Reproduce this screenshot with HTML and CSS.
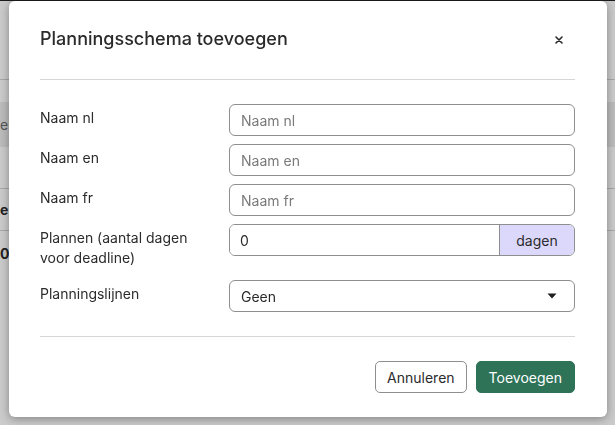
FILE: index.html
```html
<!DOCTYPE html>
<html lang="nl">
<head>
    <meta charset="UTF-8">
    <meta name="viewport" content="width=device-width, initial-scale=1.0">
    <title>Planningsschema toevoegen</title>
    <link rel="stylesheet" href="styles.css">
</head>
<body>
    <!-- Page behind the dialog -->
    <div class="page">
        <div class="topbar"></div>
        <div class="table">
            <div class="row row-head"></div>
            <div class="row row-gap"></div>
            <div class="row row-band"><span class="cell">er</span></div>
            <div class="row row-plain"></div>
            <div class="row row-plain"><span class="cell bold">e</span></div>
            <div class="row row-last"><span class="cell bold">0</span></div>
        </div>
    </div>

    <!-- Dialog -->
    <div class="backdrop">
        <div class="modal">
            <div class="modal-header">
                <h2>Planningsschema toevoegen</h2>
                <button class="close" aria-label="Sluiten">
                    <svg width="8" height="8" viewBox="0 0 8 8">
                        <path d="M1 1L7 7M7 1L1 7" stroke="#2a2a2a" stroke-width="1.6" stroke-linecap="round"/>
                    </svg>
                </button>
            </div>
            <div class="divider"></div>

            <form class="modal-body">
                <div class="form-row">
                    <label for="nameNl">Naam nl</label>
                    <input type="text" id="nameNl" placeholder="Naam nl">
                </div>
                <div class="form-row">
                    <label for="nameEn">Naam en</label>
                    <input type="text" id="nameEn" placeholder="Naam en">
                </div>
                <div class="form-row">
                    <label for="nameFr">Naam fr</label>
                    <input type="text" id="nameFr" placeholder="Naam fr">
                </div>
                <div class="form-row">
                    <label for="days">Plannen (aantal dagen voor deadline)</label>
                    <div class="input-group">
                        <input type="text" id="days" value="0">
                        <span class="addon">dagen</span>
                    </div>
                </div>
                <div class="form-row">
                    <label for="lines">Planningslijnen</label>
                    <div class="select">
                        <span>Geen</span>
                        <svg width="10" height="6" viewBox="0 0 10 6">
                            <path d="M0.5 0.5H9.5L5 5.5Z" fill="#1f1f1f"/>
                        </svg>
                    </div>
                </div>
            </form>
            <div class="divider"></div>

            <div class="modal-footer">
                <button class="btn btn-secondary">Annuleren</button>
                <button class="btn btn-primary">Toevoegen</button>
            </div>
        </div>
    </div>
</body>
</html>
```

FILE: styles.css
```css
* {
    box-sizing: border-box;
}

body {
    margin: 0;
    font-family: Inter, "Noto Sans", Arial, sans-serif;
    font-size: 14px;
    color: #2b2b2b;
    background-color: #cbcbcb;
    height: 425px;
    overflow: hidden;
}

/* Background page */
.topbar {
    height: 1px;
    background-color: #1c1c1c;
}

.row {
    display: flex;
    align-items: center;
    border-bottom: 1px solid #a8a8a8;
}

.row-head {
    height: 79px;
}

.row-gap {
    height: 22px;
    border-bottom: none;
}

.row-band {
    height: 45px;
    background-color: #bcbcbc;
    border-bottom: none;
    color: #555;
}

.row-plain {
    height: 42px;
}

.row-last {
    height: 44px;
    border-bottom: none;
}

.cell {
    font-size: 14px;
}

.bold {
    font-weight: 700;
    color: #222;
}

/* Dialog */
.backdrop {
    position: fixed;
    inset: 0;
    padding: 1px 0 0 9px;
}

.modal {
    width: 598px;
    height: 416px;
    background-color: #fff;
    border-radius: 6px;
    box-shadow: 0 2px 10px rgba(0, 0, 0, 0.35);
}

.modal-header {
    display: flex;
    align-items: center;
    justify-content: space-between;
    padding: 26px 44px 28px 31px;
}

.modal-header h2 {
    margin: 0;
    font-size: 18px;
    line-height: 24px;
    font-weight: 500;
    color: #2a2a2a;
}

.close {
    background: none;
    border: none;
    padding: 0;
    margin-top: 2px;
    display: flex;
}

.divider {
    margin: 0 32px 0 31px;
    border-bottom: 1px solid #d6d6d6;
}

.modal-body {
    margin: 0;
    padding: 24px 32px 24px 31px;
    display: flex;
    flex-direction: column;
    gap: 8px;
}

.form-row {
    display: flex;
    align-items: flex-start;
}

.form-row label {
    width: 189px;
    flex-shrink: 0;
    padding: 4px 18px 4px 0;
    line-height: 20px;
    color: #2b2b2b;
}

.form-row input,
.input-group,
.select {
    flex: 1;
    height: 32px;
    border: 1px solid #8e8e8e;
    border-radius: 6px;
}

.form-row input {
    padding: 0 11px;
    font: inherit;
    color: #2b2b2b;
    outline: none;
}

.form-row input::placeholder {
    color: #7a7a7a;
}

.input-group {
    display: flex;
    overflow: hidden;
}

.input-group input {
    border: none;
    border-radius: 0;
    height: 30px;
    min-width: 0;
    padding-left: 10px;
}

.addon {
    width: 75px;
    display: flex;
    align-items: center;
    justify-content: center;
    background-color: #dcd8fb;
    border-left: 1px solid #8e8e8e;
    color: #2b2b2b;
}

.select {
    display: flex;
    align-items: center;
    justify-content: space-between;
    padding: 0 17px 0 11px;
}

.modal-footer {
    display: flex;
    justify-content: flex-end;
    gap: 9px;
    padding: 24px 32px 0 31px;
}

.btn {
    height: 32px;
    padding: 0 11px;
    border-radius: 5px;
    font: inherit;
    font-size: 14px;
    cursor: pointer;
}

.btn-secondary {
    background-color: #fff;
    border: 1px solid #8e8e8e;
    color: #2b2b2b;
}

.btn-primary {
    background-color: #2e7358;
    border: 1px solid #2e7358;
    color: #fff;
    padding: 0 12px;
}
```
